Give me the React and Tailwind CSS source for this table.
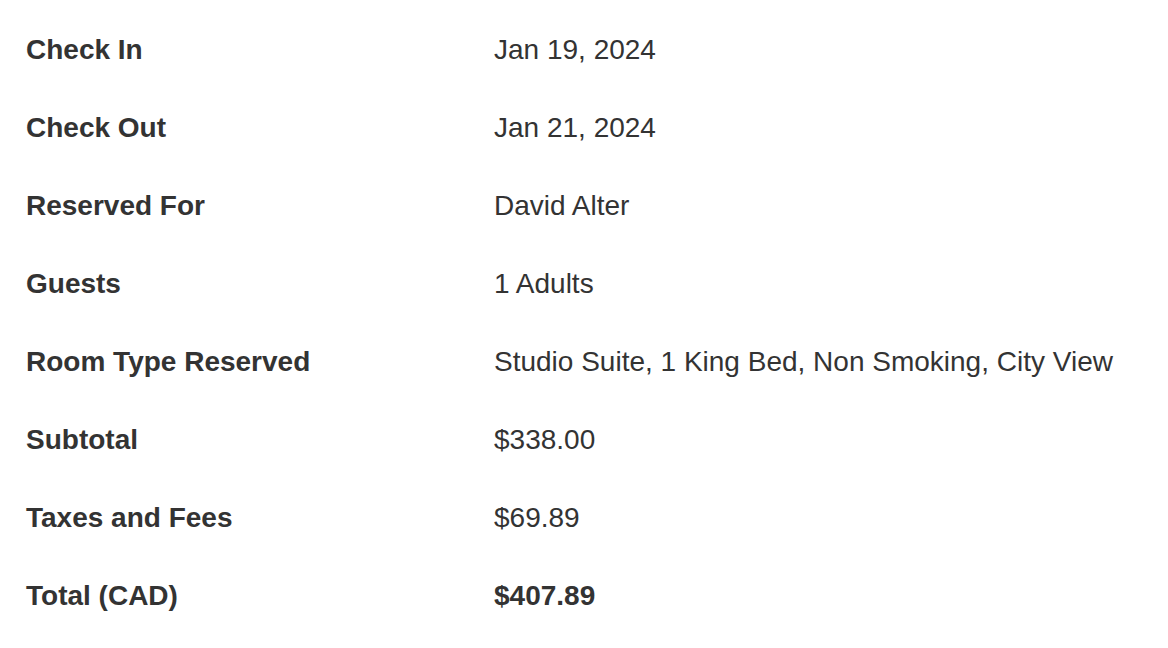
const rows = [
  ['Check In', 'Jan 19, 2024'],
  ['Check Out', 'Jan 21, 2024'],
  ['Reserved For', 'David Alter'],
  ['Guests', '1 Adults'],
  ['Room Type Reserved', 'Studio Suite, 1 King Bed, Non Smoking, City View'],
  ['Subtotal', '$338.00'],
  ['Taxes and Fees', '$69.89'],
  ['Total (CAD)', '$407.89', true],
]

export default function App() {
  return (
    <div className="min-h-screen bg-white pt-[11px] pl-[26px] text-[#333333] text-[28px]" style={{ fontFamily: '"Liberation Sans", Arial, sans-serif' }}>
      {rows.map(([label, value, bold]) => (
        <div key={label} className="flex items-center h-[78px]">
          <div className="w-[468px] font-bold">{label}</div>
          <div className={bold ? 'font-bold' : ''}>{value}</div>
        </div>
      ))}
    </div>
  )
}
